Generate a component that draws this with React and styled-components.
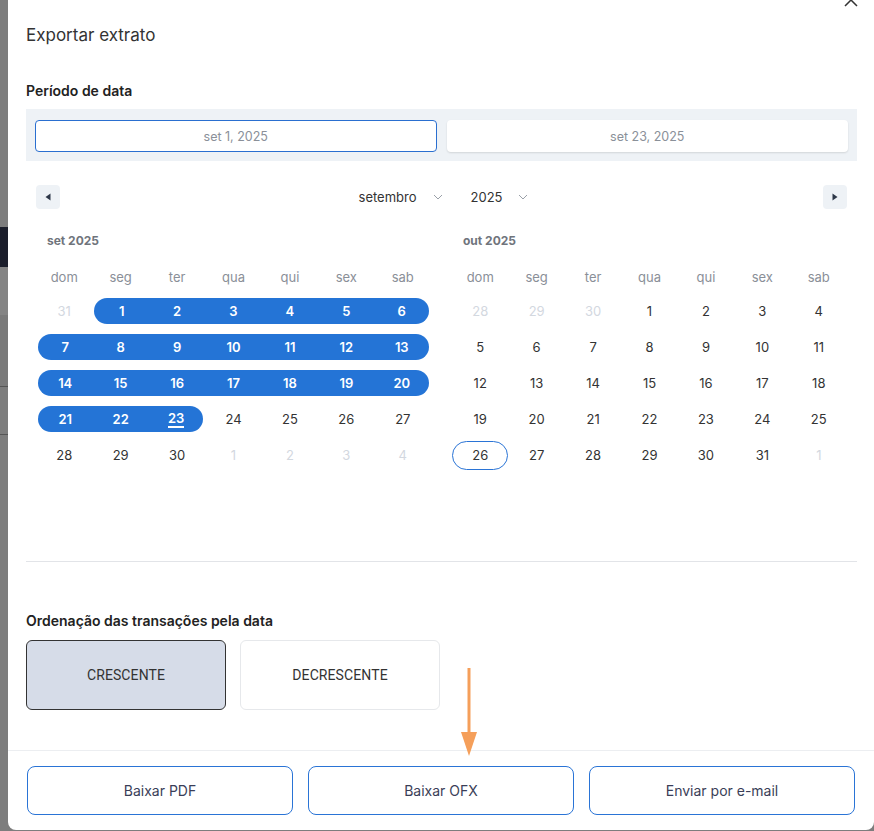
import React from 'react';
import styled, { createGlobalStyle } from 'styled-components';

const GlobalStyle = createGlobalStyle`
  html, body { margin: 0; padding: 0; overflow: hidden; }
  body { font-family: Inter, "Noto Sans", sans-serif; color: #333; background: #7d7d7d; }
  * { box-sizing: border-box; }
`;

const Page = styled.div`
  display: flex;
  width: 874px;
  height: 831px;
  background: #7d7d7d;
  overflow: hidden;
`;

const Backdrop = styled.div`
  width: 8px;
  flex: none;
  display: flex;
  flex-direction: column;
`;

const BackdropBlock = styled.div`
  height: ${p => p.h}px;
  background: ${p => p.bg};
  border-bottom: ${p => (p.line ? '1px solid #555' : 'none')};
`;

const Modal = styled.div`
  position: relative;
  width: 866px;
  height: 830px;
  background: #fff;
  border-radius: 0 0 8px 8px;
  display: flex;
  flex-direction: column;
`;

const CloseButton = styled.button`
  position: absolute;
  top: -8px;
  right: 15px;
  width: 16px;
  height: 16px;
  padding: 0;
  border: none;
  background: none;
  color: #333;
`;

const Body = styled.div`
  flex: 1;
  padding: 23px 17px 0 18px;
  display: flex;
  flex-direction: column;
`;

const Title = styled.h2`
  margin: 0;
  font-size: 17px;
  line-height: 24px;
  font-weight: 400;
  color: #333;
`;

const SectionLabel = styled.div`
  margin-top: ${p => p.mt}px;
  font-size: 14px;
  line-height: 20px;
  font-weight: 600;
  color: #222;
`;

const RangeBox = styled.div`
  margin-top: 8px;
  background: #eef2f6;
  padding: 11px 9px 9px 9px;
  display: grid;
  grid-template-columns: 1fr 1fr;
  gap: 10px;
`;

const DateInput = styled.div`
  height: 32px;
  border-radius: 4px;
  background: #fff;
  display: flex;
  align-items: center;
  justify-content: center;
  font-size: 12.5px;
  color: #8a9099;
  border: 1px solid ${p => (p.active ? '#2a6fd0' : 'transparent')};
  box-shadow: ${p => (p.active ? 'none' : '0 1px 2px rgba(0,0,0,0.12)')};
`;

const Calendar = styled.div`
  padding: 0 10px;
  margin-top: 24px;
  height: 376px;
`;

const NavRow = styled.div`
  display: flex;
  align-items: center;
  justify-content: space-between;
  height: 24px;
`;

const NavButton = styled.button`
  width: 24px;
  height: 24px;
  border: none;
  border-radius: 4px;
  background: #eef2f6;
  display: flex;
  align-items: center;
  justify-content: center;
  padding: 0;
`;

const Selects = styled.div`
  display: flex;
  align-items: center;
  gap: 28px;
  margin-left: 4px;
`;

const SelectLabel = styled.div`
  display: flex;
  align-items: center;
  gap: 16px;
  font-size: 13px;
  color: #333;
`;

const Months = styled.div`
  display: grid;
  grid-template-columns: 1fr 1fr;
  gap: 21px;
  margin-top: 24px;
`;

const MonthLabel = styled.div`
  font-size: 12px;
  line-height: 16px;
  font-weight: 700;
  color: #6f747c;
  padding-left: 11px;
  margin-bottom: 10px;
`;

const Grid = styled.div`
  display: grid;
  grid-template-columns: repeat(7, 1fr);
  grid-template-rows: 34px;
  grid-auto-rows: 36px;
`;

const Weekday = styled.div`
  display: flex;
  align-items: center;
  justify-content: center;
  padding-top: 2px;
  font-size: 13px;
  color: #8a8f98;
`;

const DayCell = styled.div`
  position: relative;
  display: flex;
  align-items: center;
  justify-content: center;
`;

const Day = styled.span`
  display: flex;
  align-items: center;
  justify-content: center;
  width: calc(100% - ${p => (p.startCap ? 2 : 0) + (p.endCap ? 2 : 0)}px);
  margin-left: ${p => (p.startCap ? 2 : 0)}px;
  margin-right: ${p => (p.endCap ? 2 : 0)}px;
  height: ${p => (p.today ? 29 : 26)}px;
  font-size: 13px;
  color: ${p => (p.selected ? '#fff' : p.outside ? '#d3d8df' : '#333')};
  font-weight: ${p => (p.selected ? 600 : 400)};
  background: ${p => (p.selected ? '#2474d6' : 'transparent')};
  border: ${p => (p.today ? '1px solid #2a74d6' : 'none')};
  border-radius: ${p =>
    p.today ? '15px' : `${p.startCap ? 13 : 0}px ${p.endCap ? 13 : 0}px ${p.endCap ? 13 : 0}px ${p.startCap ? 13 : 0}px`};
`;

const Underlined = styled.span`
  border-bottom: 2px solid #fff;
  line-height: 15px;
`;

const Divider = styled.hr`
  margin: 0;
  border: none;
  border-top: 1px solid #e2e4e8;
`;

const Toggles = styled.div`
  display: flex;
  gap: 14px;
  margin-top: 9px;
`;

const Toggle = styled.button`
  width: 200px;
  height: 70px;
  border-radius: 6px;
  border: 1px solid ${p => (p.active ? '#333' : '#e6e8eb')};
  background: ${p => (p.active ? '#d6dce8' : '#fff')};
  font-family: Roboto, "Liberation Sans", sans-serif;
  font-size: 14px;
  color: #333;
  text-transform: uppercase;
  letter-spacing: 0.1px;
`;

const Footer = styled.div`
  border-top: 1px solid #eceef1;
  padding: 15px 19px 15px 19px;
  display: grid;
  grid-template-columns: repeat(3, 1fr);
  gap: 15px;
`;

const FooterButton = styled.button`
  height: 49px;
  border: 1px solid #2a74d6;
  border-radius: 8px;
  background: #fff;
  font-family: Inter, "Noto Sans", sans-serif;
  font-size: 14px;
  color: #3a3e58;
`;

const Arrow = styled.svg`
  position: absolute;
  left: 452px;
  top: 668px;
`;

const Chevron = () => (
  <svg width="10" height="6" viewBox="0 0 10 6">
    <path d="M1 1l4 4 4-4" fill="none" stroke="#9aa0a8" strokeWidth="1" />
  </svg>
);

const weekdays = ['dom', 'seg', 'ter', 'qua', 'qui', 'sex', 'sab'];

const sept = [
  [{ d: 31, o: true }, 1, 2, 3, 4, 5, 6],
  [7, 8, 9, 10, 11, 12, 13],
  [14, 15, 16, 17, 18, 19, 20],
  [21, 22, 23, 24, 25, 26, 27],
  [28, 29, 30, { d: 1, o: true }, { d: 2, o: true }, { d: 3, o: true }, { d: 4, o: true }],
];

const oct = [
  [{ d: 28, o: true }, { d: 29, o: true }, { d: 30, o: true }, 1, 2, 3, 4],
  [5, 6, 7, 8, 9, 10, 11],
  [12, 13, 14, 15, 16, 17, 18],
  [19, 20, 21, 22, 23, 24, 25],
  [26, 27, 28, 29, 30, 31, { d: 1, o: true }],
];

function Month({ label, rows, isSept }) {
  return (
    <div>
      <MonthLabel>{label}</MonthLabel>
      <Grid>
        {weekdays.map(w => (
          <Weekday key={w}>{w}</Weekday>
        ))}
        {rows.map((row, ri) =>
          row.map((cell, ci) => {
            const outside = typeof cell === 'object';
            const d = outside ? cell.d : cell;
            const selected = isSept && !outside && d >= 1 && d <= 23;
            const today = !isSept && !outside && d === 26;
            const startCap = selected && (d === 1 || ci === 0);
            const endCap = selected && (d === 23 || ci === 6);
            return (
              <DayCell key={`${ri}-${ci}`}>
                <Day
                  selected={selected}
                  outside={outside}
                  today={today}
                  startCap={startCap}
                  endCap={endCap}
                >
                  {selected && d === 23 ? <Underlined>{d}</Underlined> : d}
                </Day>
              </DayCell>
            );
          })
        )}
      </Grid>
    </div>
  );
}

export default function App() {
  return (
    <>
      <GlobalStyle />
      <Page>
        <Backdrop>
          <BackdropBlock h={227} bg="#7d7d7d" />
          <BackdropBlock h={40} bg="#1b1e2b" />
          <BackdropBlock h={48} bg="#848484" />
          <BackdropBlock h={72} bg="#7a7a7a" line />
          <BackdropBlock h={48} bg="#7d7d7d" line />
          <BackdropBlock h={396} bg="#7d7d7d" />
        </Backdrop>
        <Modal>
          <CloseButton aria-label="Fechar">
            <svg width="16" height="16" viewBox="0 0 16 16">
              <path d="M2 2l12 12M14 2L2 14" stroke="#333" strokeWidth="1.5" fill="none" />
            </svg>
          </CloseButton>
          <Body>
            <Title>Exportar extrato</Title>
            <SectionLabel mt={34}>Período de data</SectionLabel>
            <RangeBox>
              <DateInput active>set 1, 2025</DateInput>
              <DateInput>set 23, 2025</DateInput>
            </RangeBox>
            <Calendar>
              <NavRow>
                <NavButton aria-label="Anterior">
                  <svg width="6" height="8" viewBox="0 0 6 8">
                    <path d="M5.5 0.5v7L0.5 4z" fill="#2d3748" />
                  </svg>
                </NavButton>
                <Selects>
                  <SelectLabel>
                    setembro <Chevron />
                  </SelectLabel>
                  <SelectLabel>
                    2025 <Chevron />
                  </SelectLabel>
                </Selects>
                <NavButton aria-label="Próximo">
                  <svg width="6" height="8" viewBox="0 0 6 8">
                    <path d="M0.5 0.5v7L5.5 4z" fill="#2d3748" />
                  </svg>
                </NavButton>
              </NavRow>
              <Months>
                <Month label="set 2025" rows={sept} isSept />
                <Month label="out 2025" rows={oct} />
              </Months>
            </Calendar>
            <Divider />
            <SectionLabel mt={49}>Ordenação das transações pela data</SectionLabel>
            <Toggles>
              <Toggle active>Crescente</Toggle>
              <Toggle>Decrescente</Toggle>
            </Toggles>
          </Body>
          <Footer>
            <FooterButton>Baixar PDF</FooterButton>
            <FooterButton>Baixar OFX</FooterButton>
            <FooterButton>Enviar por e-mail</FooterButton>
          </Footer>
          <Arrow width="18" height="90" viewBox="0 0 18 90">
            <path d="M9 0v68" stroke="#f59f5a" strokeWidth="3" />
            <path d="M1 64h16L9 88z" fill="#f59f5a" />
          </Arrow>
        </Modal>
      </Page>
    </>
  );
}
